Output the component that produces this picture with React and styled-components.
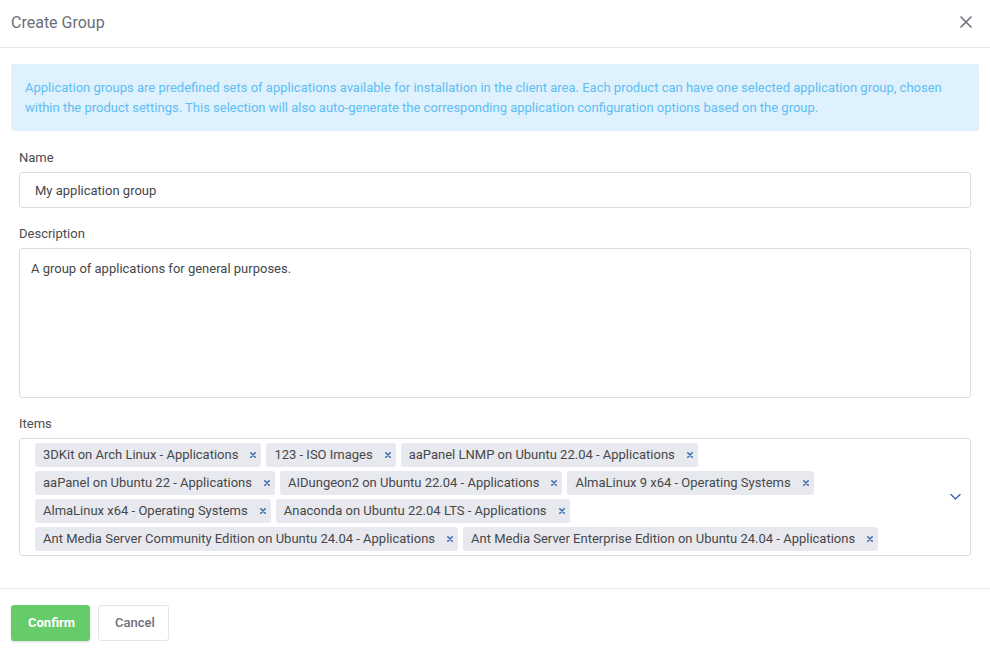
import React from "react";
import styled, { createGlobalStyle } from "styled-components";

const Global = createGlobalStyle`
  html, body { margin: 0; padding: 0; background: #fff; }
  body { font-family: Roboto, "Noto Sans", "Liberation Sans", sans-serif; }
  * { box-sizing: border-box; }
`;

const Modal = styled.div`
  width: 990px;
  display: flex;
  flex-direction: column;
  background: #fff;
  & > * { flex-shrink: 0; }
`;

const Header = styled.div`
  height: 48px;
  display: flex;
  align-items: center;
  justify-content: space-between;
  padding: 0 17px 0 11px;
  border-bottom: 1px solid #e6e7eb;
`;

const Title = styled.h4`
  margin: 0;
  font-size: 16px;
  font-weight: 400;
  color: #6b7079;
  position: relative;
  top: -1px;
`;

const CloseBtn = styled.button`
  border: 0;
  background: none;
  padding: 0;
  width: 14px;
  height: 14px;
  display: flex;
  align-items: center;
  justify-content: center;
  cursor: pointer;
  position: relative;
  top: -2px;
`;

const Body = styled.div`
  padding: 16px 11px 32px;
  border-bottom: 1px solid #e6e7eb;
`;

const Alert = styled.div`
  background: #def1fd;
  color: #5ebef3;
  font-size: 13px;
  line-height: 20px;
  padding: 14px 14px 13px;
  border-radius: 3px;
  margin-bottom: 16px;
`;

const Form = styled.div`
  padding: 0 8px;
  display: flex;
  flex-direction: column;
  gap: 15px;
`;

const Group = styled.div`
  display: flex;
  flex-direction: column;
  gap: 5px;
`;

const Label = styled.label`
  font-size: 13px;
  line-height: 20px;
  color: #4a4c50;
  position: relative;
  top: 1px;
`;

const Input = styled.div`
  height: 36px;
  border: 1px solid #dcdde3;
  border-radius: 3px;
  padding: 0 15px;
  display: flex;
  align-items: center;
  font-size: 13px;
  color: #45474b;
`;

const TextArea = styled.div`
  height: 150px;
  border: 1px solid #dcdde3;
  border-radius: 3px;
  padding: 10px 11px;
  font-size: 13px;
  line-height: 20px;
  color: #45474b;
`;

const Multi = styled.div`
  border: 1px solid #dcdde3;
  border-radius: 3px;
  padding: 4px 28px 0 15px;
  display: flex;
  align-items: center;
  position: relative;
`;

const Tags = styled.div`
  display: flex;
  flex-wrap: wrap;
  gap: 4px 5px;
  padding-bottom: 4px;
  flex: 1;
`;

const Tag = styled.span`
  height: 24px;
  display: inline-flex;
  align-items: center;
  background: #e8e9ee;
  border-radius: 3px;
  padding: 0 5px 1px 8px;
  font-size: 13px;
  color: #45474b;
  white-space: nowrap;
`;

const TagX = styled.span`
  margin-left: 12px;
  display: inline-flex;
  align-items: center;
`;

const Chevron = styled.span`
  position: absolute;
  right: 9px;
  top: 50%;
  transform: translateY(-50%);
  display: flex;
`;

const Footer = styled.div`
  padding: 16px 11px;
  display: flex;
  gap: 8px;
`;

const Button = styled.button`
  height: 36px;
  border-radius: 3px;
  font-family: Roboto, "Liberation Sans", sans-serif;
  font-size: 13px;
  padding: 0 16px 1px;
  cursor: pointer;
  ${(p) =>
    p.$primary
      ? `
    background: #66cc6a;
    border: 1px solid #66cc6a;
    color: #fff;
    font-weight: 700;
    width: 79px;
    box-shadow: 0 1px 2px rgba(0,0,0,0.15);
  `
      : `
    background: #fff;
    border: 1px solid #e3e4e8;
    color: #6b7079;
    font-weight: 500;
    width: 71px;
  `}
`;

const items = [
  "3DKit on Arch Linux - Applications",
  "123 - ISO Images",
  "aaPanel LNMP on Ubuntu 22.04 - Applications",
  "aaPanel on Ubuntu 22 - Applications",
  "AIDungeon2 on Ubuntu 22.04 - Applications",
  "AlmaLinux 9 x64 - Operating Systems",
  "AlmaLinux x64 - Operating Systems",
  "Anaconda on Ubuntu 22.04 LTS - Applications",
  "Ant Media Server Community Edition on Ubuntu 24.04 - Applications",
  "Ant Media Server Enterprise Edition on Ubuntu 24.04 - Applications",
];

const XSmall = () => (
  <svg width="6" height="6" viewBox="0 0 6 6">
    <path d="M0.8 0.8 L5.2 5.2 M5.2 0.8 L0.8 5.2" stroke="#3d6eb4" strokeWidth="1.6" strokeLinecap="round" />
  </svg>
);

export default function App() {
  return (
    <>
      <Global />
      <Modal>
        <Header>
          <Title>Create Group</Title>
          <CloseBtn aria-label="Close">
            <svg width="12" height="12" viewBox="0 0 12 12">
              <path d="M1 1 L11 11 M11 1 L1 11" stroke="#6b7079" strokeWidth="1.6" strokeLinecap="round" />
            </svg>
          </CloseBtn>
        </Header>
        <Body>
          <Alert>
            Application groups are predefined sets of applications available for installation in the client area. Each product can have one selected application group, chosen within the product settings. This selection will also auto-generate the corresponding application configuration options based on the group.
          </Alert>
          <Form>
            <Group>
              <Label>Name</Label>
              <Input>My application group</Input>
            </Group>
            <Group>
              <Label>Description</Label>
              <TextArea>A group of applications for general purposes.</TextArea>
            </Group>
            <Group>
              <Label>Items</Label>
              <Multi>
                <Tags>
                  {items.map((t) => (
                    <Tag key={t}>
                      {t}
                      <TagX>
                        <XSmall />
                      </TagX>
                    </Tag>
                  ))}
                </Tags>
                <Chevron>
                  <svg width="11" height="7" viewBox="0 0 11 7">
                    <path d="M1 1 L5.5 5.5 L10 1" stroke="#3d6eb4" strokeWidth="1.6" fill="none" strokeLinecap="round" strokeLinejoin="round" />
                  </svg>
                </Chevron>
              </Multi>
            </Group>
          </Form>
        </Body>
        <Footer>
          <Button $primary>Confirm</Button>
          <Button>Cancel</Button>
        </Footer>
      </Modal>
    </>
  );
}
